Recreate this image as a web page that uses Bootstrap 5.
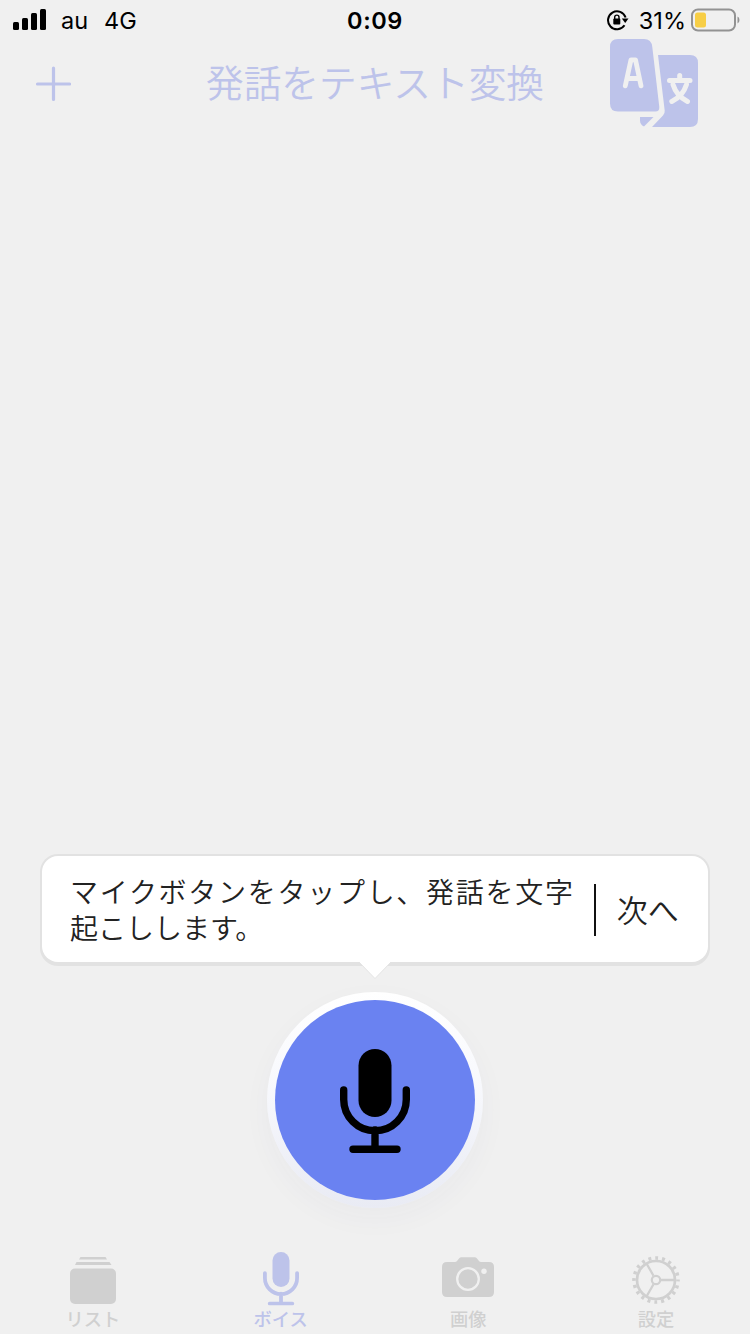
<!DOCTYPE html>
<html lang="ja">
<head>
<meta charset="utf-8">
<meta name="viewport" content="width=device-width, initial-scale=1">
<title>発話をテキスト変換</title>
<link rel="stylesheet" href="https://cdn.jsdelivr.net/npm/bootstrap@5.3.0/dist/css/bootstrap.min.css">
<style>
:root{--lav:#bdc3ea;--gray:#d0d0d0}
body{background:#f0f0f0;font-family:Inter,"Noto Sans CJK JP",sans-serif;height:1334px;overflow:hidden;color:#222}
svg{display:block;flex:none}
.status{height:40px;padding:0 10px 0 13px;font-size:23.500px;line-height:42px;color:#000}
.status .label{padding-top:2px}
.status .clock{left:0;right:0;top:0;font-weight:600;letter-spacing:.6px}
.topbar{height:90px;padding:0 51px 0 35px;color:var(--lav)}
.topbar h1{font:350 37.7px/56px "Noto Sans CJK JP",sans-serif;margin:13px 0 0 0}
.tip{margin:0 42px;height:106px;border-radius:16px;padding:0 29px 0 28px;box-shadow:0 0 0 2px #e2e2e2,0 2px 0 2px #e2e2e2;font:350 28px/36px "Noto Sans CJK JP",sans-serif}
.tip .wide{letter-spacing:1.72px}
.tip .divider{width:2px;height:52px;background:#111;margin:2px 0 0 19px}
.tip .next{font-size:31px;margin-left:21px}
.tip .tail{top:105px;left:317px}
.mic{width:216px;height:216px;margin:30px auto 0;padding:8px;background:linear-gradient(#fff,#f8f9fd 40%,#e9ebf4);box-shadow:0 10px 30px rgba(50,60,120,.035)}
.mic button{width:200px;height:200px;border:0;padding:0;background:#6a82f1;color:#000}
.tabs{height:94px;margin:32px 0 0 -1px;color:var(--gray);font:500 18.300px/24px "Noto Sans CJK JP",sans-serif}
.tabs svg{height:56px;margin-top:10px}
.tabs .now{color:var(--lav)}
</style>
</head>
<body class="d-flex flex-column">
<svg width="0" height="0" class="position-absolute">
  <symbol id="micIcon" viewBox="0 0 70 104">
    <rect x="18.5" width="33" height="68" rx="16.5" fill="currentColor"/>
    <path d="M3.7 41v9.500a31.300 31.300 0 0 0 62.600 0V41M35 81v18M13 100.300h44" fill="none" stroke="currentColor" stroke-width="7.400" stroke-linecap="round"/>
  </symbol>
</svg>

<div class="status d-flex align-items-center position-relative">
  <svg width="34" height="22" viewBox="0 0 34 22"><rect y="13" width="6" height="8" rx="1.500"/><rect x="9" y="9" width="6" height="12" rx="1.500"/><rect x="18" y="4" width="6" height="17" rx="1.500"/><rect x="27" width="6" height="21" rx="1.500"/></svg>
  <span class="label" style="margin-left:14px">au</span><span class="label" style="margin-left:16px">4G</span>
  <span class="clock position-absolute text-center">0:09</span>
  <svg class="ms-auto" width="22" height="22" viewBox="0 0 22 22" style="margin-top:2px"><path d="M17.500 15.300A9 9 0 1 1 18.600 7.500" fill="none" stroke="#000" stroke-width="2"/><path d="M14.800 8.500H21.500l-3.300 4.500z"/><rect x="6.300" y="8.500" width="7" height="6" rx="1"/><path d="M7.700 9V7.300a2.150 2.150 0 0 1 4.300 0V9" fill="none" stroke="#000" stroke-width="1.400"/></svg>
  <span class="label" style="margin:0 5px 0 10px">31%</span>
  <svg width="49" height="24" viewBox="0 0 49 24"><rect x="1" y="1.500" width="43" height="21" rx="6" fill="none" stroke="#929292" stroke-width="2"/><rect x="4" y="4.500" width="11" height="15" rx="2.500" fill="#f7ce46"/><path d="M46.500 8.500q2 .7 2 3.500t-2 3.500z" fill="#929292"/></svg>
</div>

<header class="topbar d-flex justify-content-between align-items-start">
  <svg width="36" height="36" viewBox="0 0 36 36" style="margin-top:26px"><path d="M18.500 2v31.500M2.500 18H34.500" stroke="currentColor" stroke-width="3.200" stroke-linecap="round"/></svg>
  <h1 class="position-absolute start-0 end-0 text-center">発話をテキスト変換</h1>
  <svg width="88" height="88" viewBox="0 0 88 88" style="margin:-1px 1px 0 0">
    <path fill="currentColor" d="M8 0h26q7.500 0 8.300 8l7 60q.3 4.500-4 4.500H8q-8 0-8-8V8q0-8 8-8z"/>
    <path fill="currentColor" d="M48 16h32q8 0 8 8v56q0 8-8 8H42l11-11.500q2-2 1.700-5z"/>
    <path fill="currentColor" d="M30 78h13.500l-9.500 9.500q-4-2-4-6z"/>
    <path d="M15.300 46.800l5.700-26h4.500l5.500 26M18 39.500h10.500" fill="none" stroke="#f0f0f0" stroke-width="4.800" stroke-linecap="round" stroke-linejoin="round"/>
    <path d="M59.500 41.500h20.500M69.700 36.500v5M63 45.500q3.300 11.200 14.500 17M76.500 45.500q-3.500 11.500-14.700 17" fill="none" stroke="#f0f0f0" stroke-width="5" stroke-linecap="round"/>
  </svg>
</header>

<main class="flex-grow-1 d-flex flex-column justify-content-end">
  <section class="tip bg-white d-flex align-items-center position-relative">
    <div class="text-nowrap"><span class="wide">マイクボタンをタップし、発話を文字</span><br>起こしします。</div>
    <div class="divider"></div>
    <div class="next text-nowrap">次へ</div>
    <svg class="tail position-absolute" width="32" height="19" viewBox="0 0 32 19"><path d="M0 1L16 17.500L32 1V0H0z" fill="#fff"/><path d="M0 1L16 17.500L32 1" fill="none" stroke="#e0e0e0" stroke-width=".8"/></svg>
  </section>
  <div class="mic rounded-circle"><button type="button" class="rounded-circle d-flex align-items-center justify-content-center" aria-label="マイク"><svg width="70" height="104" style="margin-top:2px"><use href="#micIcon"/></svg></button></div>
</main>

<nav class="tabs row g-0 flex-shrink-0 text-center">
  <div class="col d-flex flex-column align-items-center"><svg width="46" viewBox="0 0 46 56" fill="currentColor"><path d="M10.500 7h25l1.500 2.500H9zM6.500 12h33l2 3H5z"/><rect y="18.500" width="46" height="35.500" rx="5"/></svg><span>リスト</span></div>
  <div class="col d-flex flex-column align-items-center now"><svg width="36" viewBox="0 0 36 56"><use href="#micIcon" width="36" height="53.500" y="2"/></svg><span>ボイス</span></div>
  <div class="col d-flex flex-column align-items-center"><svg width="52" viewBox="0 0 52 56"><path fill="currentColor" d="M5 12h8q1.200 0 2-1l2-2.500q1-1.200 2.500-1.200h13q1.500 0 2.500 1.200l2 2.500q.8 1 2 1h8q5 0 5 5v25q0 5-5 5H5q-5 0-5-5v-25q0-5 5-5z"/><circle cx="26" cy="29" r="10.800" fill="none" stroke="#f0f0f0" stroke-width="2.300"/><circle cx="42" cy="21.300" r="2.700" fill="#f0f0f0"/></svg><span>画像</span></div>
  <div class="col d-flex flex-column align-items-center"><svg width="48" viewBox="0 0 48 56"><g fill="none" stroke="currentColor"><circle cx="24" cy="30" r="22" stroke-width="3.600" stroke-dasharray="2.900 4.012" stroke-dashoffset="1.450"/><circle cx="24" cy="30" r="19" stroke-width="2.700"/><circle cx="24" cy="30" r="4.200" stroke-width="2.200"/><path stroke-width="2.300" d="M29 30h14M21.500 25.700L14.500 13.500M21.500 34.300L14.500 46.500"/></g></svg><span>設定</span></div>
</nav>
<script src="https://cdn.jsdelivr.net/npm/bootstrap@5.3.0/dist/js/bootstrap.bundle.min.js"></script>
</body>
</html>
